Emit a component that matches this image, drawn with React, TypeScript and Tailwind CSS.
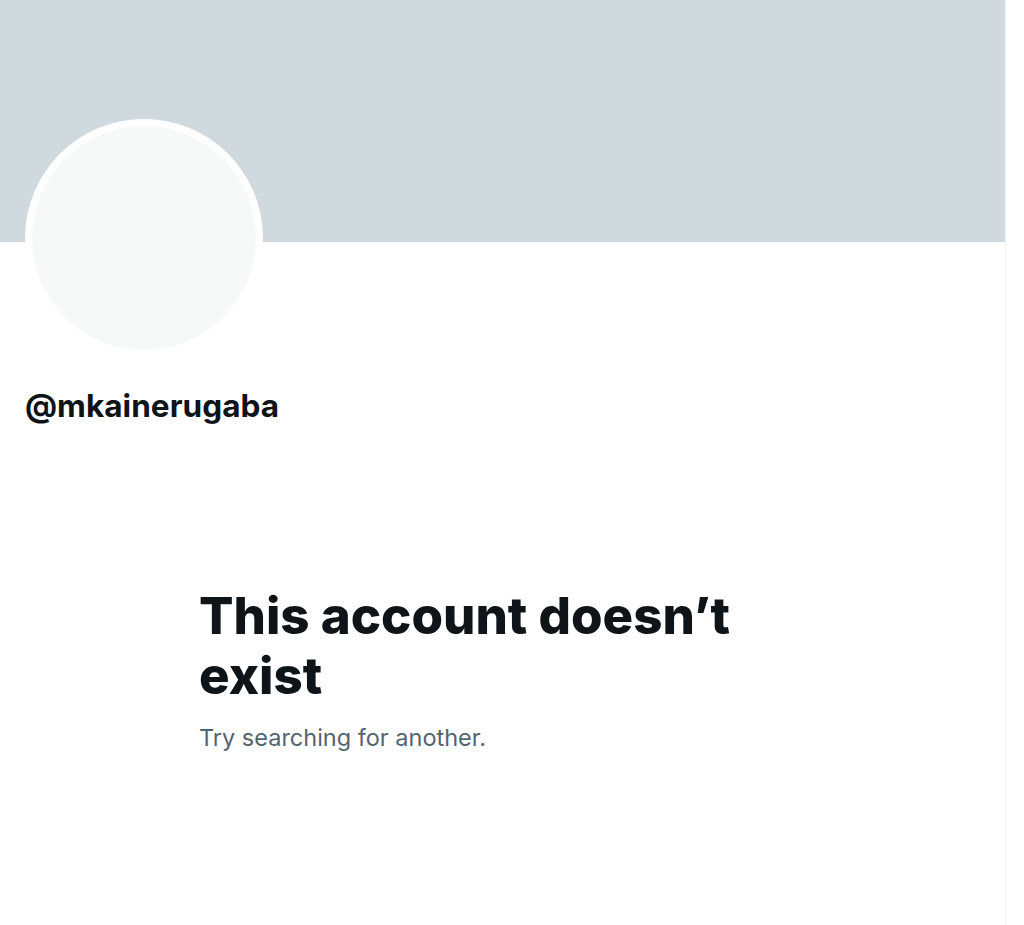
export default function App() {
  return (
    <div
      className="flex h-[925px] w-[1024px] bg-white"
      style={{ fontFamily: "Inter, 'Liberation Sans', sans-serif" }}
    >
      <main className="flex w-[1006px] flex-col border-r border-[#eff3f4]">
        <div className="h-[242px] bg-[#cfd9de]" />

        <div className="px-[25px]">
          <div className="-mt-[123px] h-[238px] w-[238px] rounded-full bg-white p-[7px]">
            <div className="h-full w-full rounded-full bg-[#f7f9f9]" />
          </div>

          <h2 className="mt-[31px] text-[31.6px] font-bold leading-[36px] text-[#0f1419]">
            @mkainerugaba
          </h2>
        </div>

        <div className="mt-[162px] pl-[199px]">
          <h1 className="max-w-[560px] text-[51px] font-extrabold leading-[60px] text-[#0f1419]">
            This account doesn’t exist
          </h1>
          <p className="mt-[17px] text-[23.5px] leading-[30px] text-[#536471]">
            Try searching for another.
          </p>
        </div>
      </main>
    </div>
  );
}
